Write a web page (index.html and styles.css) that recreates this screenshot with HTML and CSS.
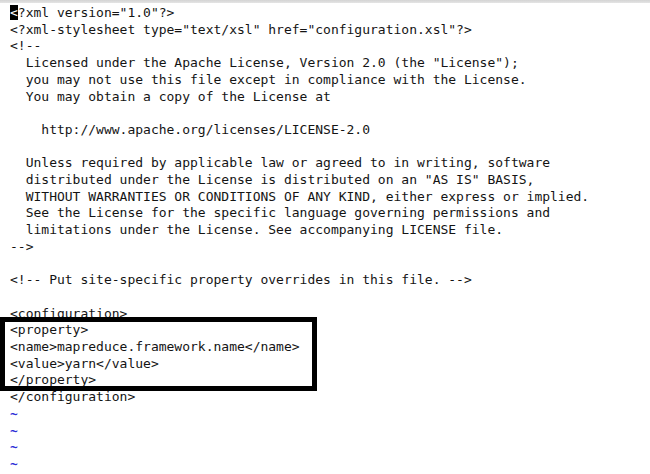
FILE: index.html
```html
<!DOCTYPE html>
<html>
<head>
<meta charset="utf-8">
<link rel="stylesheet" href="styles.css">
</head>
<body>
<div class="topbar"></div>
<div class="editor">
<pre class="code"><span class="cursor">&lt;</span>?xml version="1.0"?&gt;
&lt;?xml-stylesheet type="text/xsl" href="configuration.xsl"?&gt;
&lt;!--
  Licensed under the Apache License, Version 2.0 (the "License");
  you may not use this file except in compliance with the License.
  You may obtain a copy of the License at

    http://www.apache.org/licenses/LICENSE-2.0

  Unless required by applicable law or agreed to in writing, software
  distributed under the License is distributed on an "AS IS" BASIS,
  WITHOUT WARRANTIES OR CONDITIONS OF ANY KIND, either express or implied.
  See the License for the specific language governing permissions and
  limitations under the License. See accompanying LICENSE file.
--&gt;

&lt;!-- Put site-specific property overrides in this file. --&gt;

&lt;configuration&gt;
&lt;property&gt;
&lt;name&gt;mapreduce.framework.name&lt;/name&gt;
&lt;value&gt;yarn&lt;/value&gt;
&lt;/property&gt;
&lt;/configuration&gt;
<span class="tilde">~</span>
<span class="tilde">~</span>
<span class="tilde">~</span>
<span class="tilde">~</span></pre>
<div class="highlight"></div>
</div>
</body>
</html>
```

FILE: styles.css
```css
html, body {
  margin: 0;
  padding: 0;
  background: #ffffff;
  width: 650px;
  height: 474px;
  overflow: hidden;
}
.topbar {
  height: 3px;
  background: linear-gradient(#d4d4d4, #e4e4e4);
}
.editor {
  position: relative;
}
.code {
  margin: 0;
  padding: 2px 0 0 10px;
  font-family: "DejaVu Sans Mono", monospace;
  font-size: 13px;
  line-height: 16.7px;
  color: #141414;
}
.cursor {
  background: #000;
  color: #fff;
}
.tilde {
  color: #2b2bd6;
  font-weight: bold;
}
.highlight {
  position: absolute;
  left: 0;
  top: 314px;
  width: 307px;
  height: 64px;
  border: 5px solid #000;
}
```
